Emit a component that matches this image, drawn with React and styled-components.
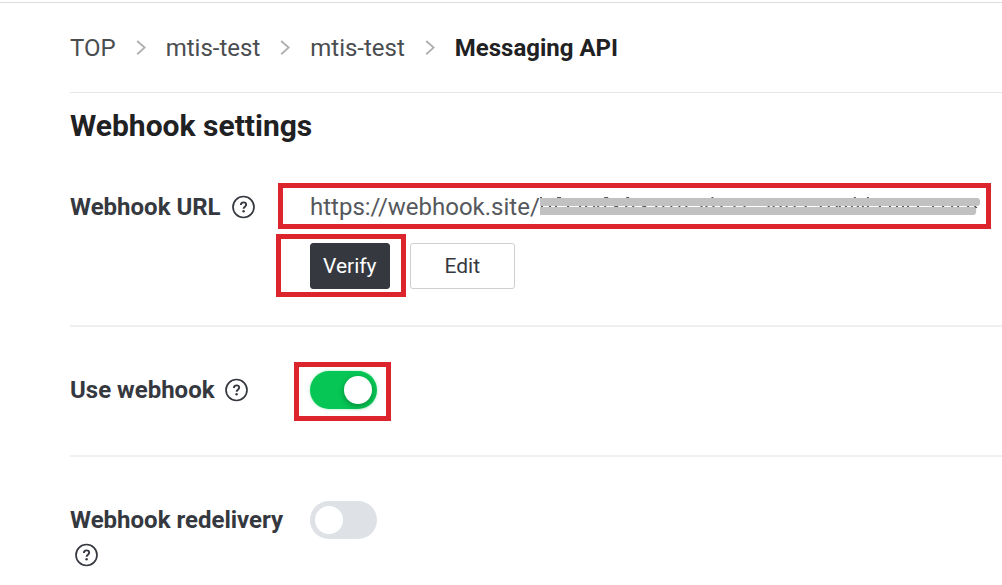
import styled, { createGlobalStyle, css } from "styled-components";
import { useState } from "react";

const App = () => {
  const [useWebhook, setUseWebhook] = useState(true);
  const [redelivery, setRedelivery] = useState(false);

  return <>
    <GlobalStyle />
    <Page>
      <Breadcrumb aria-label="Breadcrumb">
        <Crumb href="#top">TOP</Crumb>
        <Chevron />
        <Crumb href="#provider">mtis-test</Crumb>
        <Chevron />
        <Crumb href="#channel">mtis-test</Crumb>
        <Chevron />
        <Current aria-current="page">Messaging API</Current>
      </Breadcrumb>
      <Title>Webhook settings</Title>
      <Row>
        <Label as="div">Webhook URL <Help /></Label>
        <div>
          <Highlight $inset="-5px 11px -4px -32px">
            <Url>
              <span>https://webhook.site/</span>
              <Redacted />
            </Url>
          </Highlight>
          <Buttons>
            <Highlight $inset="-9px -16px -8px -34px">
              <Button type="button" $primary>Verify</Button>
            </Highlight>
            <Button type="button">Edit</Button>
          </Buttons>
        </div>
      </Row>
      <Row>
        <Label htmlFor="use-webhook">Use webhook <Help /></Label>
        <SwitchCell>
          <Highlight $inset="-9px -14px -12px -16px">
            <Switch id="use-webhook" type="checkbox" role="switch" checked={useWebhook} onChange={(e) => setUseWebhook(e.target.checked)} />
          </Highlight>
        </SwitchCell>
      </Row>
      <Row>
        <Label htmlFor="redelivery">Webhook redelivery <Help /></Label>
        <SwitchCell>
          <Switch id="redelivery" type="checkbox" role="switch" checked={redelivery} onChange={(e) => setRedelivery(e.target.checked)} />
        </SwitchCell>
      </Row>
    </Page>
  </>
}

export default App;

const Chevron = () => (
  <ChevronIcon viewBox="0 0 10 16" aria-hidden="true">
    <path d="M1.200 1 8.600 7.600l-7.400 6.600" fill="none" stroke="#b0b0b0" strokeWidth="1.900" />
  </ChevronIcon>
);

const Help = () => (
  <HelpIcon viewBox="0 0 24 24" role="img" aria-label="Help">
    <circle cx="11.500" cy="12" r="10.500" fill="none" stroke="currentColor" strokeWidth="1.700" />
    <path d="M8.900 10c0-1.700 1.100-2.600 2.600-2.600s2.700.9 2.700 2.400c0 1.900-2.600 2-2.600 4" fill="none" stroke="currentColor" strokeWidth="1.900" />
    <circle cx="11.600" cy="16.200" r="1.200" fill="currentColor" />
  </HelpIcon>
);

// specks of text left visible between the two strokes
const specks = [1, 9, 15, 27, 39, 45, 53, 57, 64, 74, 76, 85, 92, 102, 104, 115, 122, 130, 138,
  145, 160, 165, 172, 180, 193, 203, 227, 232, 239, 245, 253, 264, 279, 287,
  295, 298, 304, 310, 316, 321, 326, 338, 348, 355, 361, 366, 376, 391, 401, 410, 416, 426, 433];

const Redacted = () => (
  <RedactedBar viewBox="0 0 439 20" preserveAspectRatio="none" role="img" aria-label="Hidden part of the URL">
    <path d="M0 1h436q3 0 3 4t-3 4H0zM0 10h435v4q0 4-3 4H0z" fill="#c1c1c1" />
    <path d={specks.map(x => `M${x} 9.500h2`).join("")} fill="none" stroke="#55585c" />
    <path d="M0 .5h2M17 .5h4M64 .5h4M86 .5h3M171 .5h2M313 .5h2M326 .5h2M434 10.500h2" fill="none" stroke="#55585c" />
  </RedactedBar>
);

const GlobalStyle = createGlobalStyle`
  body {
    margin: 0;
    background: #fff;
    font-family: Roboto, "Liberation Sans", sans-serif;
    font-size: 24px;
    color: #35393f;
  }
`

const Page = styled.main`
  margin-top: 2px;
  padding-left: 70px;
  border-top: 1px solid #dcdcdc;
`

const Breadcrumb = styled.nav`
  display: flex;
  align-items: center;
  height: 89px;
  border-bottom: 1px solid #e6e6e6;
`

const Crumb = styled.a`
  color: #4a4d50;
  text-decoration: none;
`

const Current = styled.strong`
  font-weight: 700;
  color: #1f2123;
`

const ChevronIcon = styled.svg`
  width: 10px;
  height: 16px;
  margin: 0 20px;
`

const Title = styled.h1`
  margin: 0;
  padding-top: 15px;
  font-size: 30px;
  line-height: 36px;
  color: #1f2123;
`

const Row = styled.section`
  display: grid;
  grid-template-columns: 240px 1fr;
  padding: 44px 0 46px;
  border-bottom: 2px solid #efefef;
  ${Title} + & {
    padding-bottom: 36px;
  }
  &:last-child {
    padding-bottom: 0;
    border-bottom: 0;
  }
`

const Label = styled.label`
  padding: 2px 12px 0 0;
  font-weight: 700;
  line-height: 35px;
`

const HelpIcon = styled.svg`
  width: 24px;
  height: 24px;
  margin-left: 5px;
  vertical-align: -4px;
`

const Highlight = styled.div`
  position: relative;
  &::after {
    content: "";
    position: absolute;
    inset: ${props => props.$inset};
    border: 5px solid #dc242c;
    pointer-events: none;
  }
`

const Url = styled.div`
  display: flex;
  align-items: center;
  padding: 1px 22px 0 0;
  line-height: 36px;
  color: #55585c;
`

const RedactedBar = styled.svg`
  flex: 1;
  min-width: 0;
  height: 20px;
`

const Buttons = styled.div`
  display: flex;
  gap: 20px;
  margin-top: 18px;
`

const Button = styled.button`
  box-sizing: border-box;
  display: block;
  height: 46px;
  padding: 0 34px;
  border: 1px solid #cfcfcf;
  border-radius: 3px;
  background: #fff;
  color: #35393f;
  font: 21px Roboto, "Liberation Sans", sans-serif;
  ${props => props.$primary && css`
    padding: 0 12px;
    border-color: #35393f;
    background: #35393f;
    color: #fff;
  `}
`

const SwitchCell = styled.div`
  display: flex;
  align-items: flex-start;
`

const Switch = styled.input`
  appearance: none;
  display: block;
  box-sizing: border-box;
  width: 67px;
  height: 38px;
  margin: 0;
  padding: 5px;
  border-radius: 19px;
  background: #dee1e6;
  &::before {
    content: "";
    display: block;
    width: 28px;
    height: 28px;
    border-radius: 50%;
    background: #fff;
  }
  &:checked {
    background: #06c755;
    box-shadow: 0 0 3px #06c75566;
  }
  &:checked::before {
    margin-left: auto;
    box-shadow: 0 2px 6px #00000055;
  }
`
